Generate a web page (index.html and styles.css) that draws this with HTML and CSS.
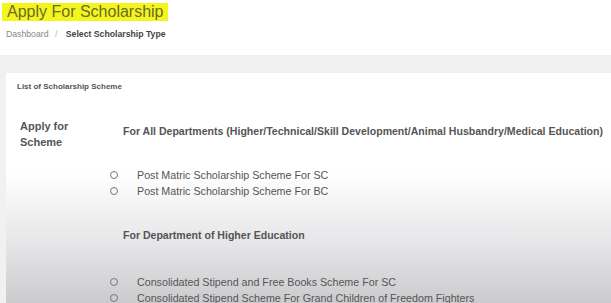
FILE: index.html
```html
<!DOCTYPE html>
<html lang="en">
<head>
    <meta charset="UTF-8">
    <title>Apply For Scholarship</title>
    <link rel="stylesheet" href="styles.css">
</head>
<body>
    <div class="page-head">
        <h1><span class="mark">Apply For Scholarship</span></h1>
        <div class="crumbs">
            <span class="crumb">Dashboard</span>
            <span class="sep">/</span>
            <span class="crumb active">Select Scholarship Type</span>
        </div>
    </div>

    <div class="main">
        <div class="card">
            <div class="card-title">List of Scholarship Scheme</div>
            <div class="card-body">
                <div class="side-label">Apply for<br>Scheme</div>
                <div class="schemes">
                    <div class="group">
                        <h3>For All Departments (Higher/Technical/Skill Development/Animal Husbandry/Medical Education)</h3>
                        <label class="opt"><input type="radio" name="scheme"><span>Post Matric Scholarship Scheme For SC</span></label>
                        <label class="opt"><input type="radio" name="scheme"><span>Post Matric Scholarship Scheme For BC</span></label>
                    </div>
                    <div class="group">
                        <h3>For Department of Higher Education</h3>
                        <label class="opt"><input type="radio" name="scheme"><span>Consolidated Stipend and Free Books Scheme For SC</span></label>
                        <label class="opt"><input type="radio" name="scheme"><span>Consolidated Stipend Scheme For Grand Children of Freedom Fighters</span></label>
                    </div>
                </div>
            </div>
        </div>
    </div>
</body>
</html>
```

FILE: styles.css
```css
* {
    margin: 0;
    padding: 0;
    box-sizing: border-box;
    font-family: 'Liberation Sans', Arial, sans-serif;
}

body {
    background: #fff;
    color: #555;
    width: 611px;
    height: 303px;
    overflow: hidden;
}

.page-head {
    padding: 3px 0 0 2px;
    height: 55px;
}

h1 {
    font-size: 16px;
    font-weight: normal;
    line-height: 18px;
    color: #6a6a2a;
}

.mark {
    display: inline-block;
    background: #f5f51e;
    padding: 0 4px 0 5px;
}

.crumbs {
    margin-top: 8px;
    padding-left: 4px;
    font-size: 8.7px;
    color: #888;
}

.sep {
    margin: 0 6px 0 4px;
    color: #bbb;
}

.crumb.active {
    color: #444;
    font-weight: bold;
}

.main {
    background: #f1f1f1;
    padding: 18px 0 0 6px;
    height: 248px;
}

.card {
    background: linear-gradient(to bottom, #fff 0, #fff 100px, #e6e6e8 170px, #cbcbcd 230px);
    height: 100%;
    overflow: hidden;
}

.card-title {
    font-size: 8px;
    font-weight: bold;
    color: #555;
    padding: 9px 0 0 11px;
    height: 34px;
}

.card-body {
    display: flex;
}

.side-label {
    flex-shrink: 0;
    width: 117px;
    padding: 11px 0 0 14px;
    font-size: 11px;
    font-weight: bold;
    line-height: 16px;
    color: #555;
}

.schemes {
    flex: 1;
    min-width: 0;
}

.group h3 {
    font-size: 10.55px;
    font-weight: bold;
    white-space: nowrap;
    color: #555;
    padding-top: 18px;
    height: 60px;
}

.group + .group {
    margin-top: 8px;
}

.group + .group h3 {
    height: 67px;
    padding-top: 22px;
}

.opt {
    display: flex;
    align-items: center;
    font-size: 10.7px;
    color: #555;
    height: 16px;
    margin-left: -13px;
}

.opt input {
    appearance: none;
    width: 8px;
    height: 8px;
    border: 1px solid #777;
    border-radius: 50%;
    margin-right: 19px;
}
```
